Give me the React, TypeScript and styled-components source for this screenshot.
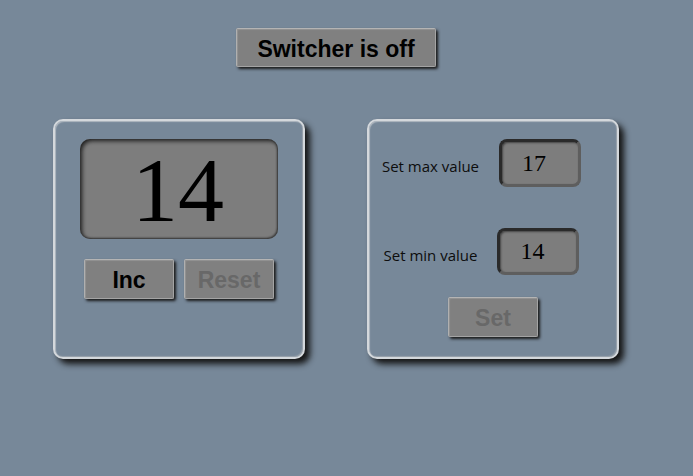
import React from "react";
import styled, { createGlobalStyle } from "styled-components";

const Global = createGlobalStyle`
  html, body { margin: 0; padding: 0; background: #778899; }
  body { font-family: "Liberation Sans", Arial, sans-serif; }
`;

const Page = styled.div`
  width: 693px;
  height: 476px;
  box-sizing: border-box;
  padding: 28px 0 0 53px;
  background: #778899;
`;

const Column = styled.div`
  width: 566px;
  display: flex;
  flex-direction: column;
  align-items: center;
  gap: 52px;
`;

const Cards = styled.div`
  display: flex;
  gap: 62px;
  align-self: stretch;
`;

const Button = styled.button<{ $w: number; $h?: number; $disabled?: boolean }>`
  width: ${(p) => p.$w}px;
  height: ${(p) => p.$h ?? 40}px;
  box-sizing: border-box;
  background: #808080;
  border: 1px solid #a4a4a4;
  border-top-color: #b4b4b4;
  border-left-color: #b0b0b0;
  border-radius: 2px;
  box-shadow: 2px 2px 3px #1a1a1a, inset 1px 1px 1px rgba(255,255,255,0.15);
  font-family: "Liberation Sans", Arial, sans-serif;
  font-weight: bold;
  font-size: 23px;
  color: ${(p) => (p.$disabled ? "#686868" : "#000")};
  padding: 3px 0 0 0;
  cursor: default;
`;

const Card = styled.div`
  width: 252px;
  height: 240px;
  box-sizing: border-box;
  border: 2px solid #d4d8dc;
  border-radius: 10px;
  background: #778899;
  box-shadow: 5px 5px 6px #151515, inset 1px 1px 1px #b0b8c0, inset -1px -1px 1px #9aa3ac;
  padding-top: 18px;
  display: flex;
  flex-direction: column;
  align-items: center;
`;

const Display = styled.div`
  width: 198px;
  height: 100px;
  box-sizing: border-box;
  background: #7d7d7d;
  border-radius: 10px;
  box-shadow: inset 2px 2px 4px #1e1e1e, inset -1px -1px 2px #3a3a3a;
  display: flex;
  align-items: center;
  justify-content: center;
  font-family: "Liberation Serif", "Times New Roman", serif;
  font-size: 92px;
  line-height: 1;
  color: #000;
  padding: 2px 2px 0 0;
`;

const ButtonRow = styled.div`
  display: flex;
  gap: 10px;
  margin-top: 20px;
`;

const SettingRow = styled.div<{ $mt: number; $h: number }>`
  display: flex;
  align-items: center;
  justify-content: center;
  gap: 20px;
  margin-top: ${(p) => p.$mt}px;
  height: ${(p) => p.$h}px;
  align-self: stretch;
  padding-right: 23px;
`;

const Label = styled.span`
  font-family: "Open Sans", "Noto Sans", sans-serif;
  font-size: 15px;
  color: #0d0d0d;
  padding-top: 6px;
`;

const NumberBox = styled.div<{ $h: number }>`
  width: 82px;
  height: ${(p) => p.$h}px;
  box-sizing: border-box;
  background: #7d7d7d;
  border: 3px solid;
  border-color: #2a2a2a #5e5e5e #5e5e5e #2a2a2a;
  border-radius: 8px;
  box-shadow: inset 1px 1px 2px #444;
  display: flex;
  align-items: center;
  justify-content: center;
  padding-right: 12px;
  font-family: "Liberation Serif", "Times New Roman", serif;
  font-size: 24px;
  color: #000;
`;

const SetWrap = styled.div`
  margin-top: 22px;
`;

export default function App() {
  return (
    <>
      <Global />
      <Page>
        <Column>
          <Button $w={200} $h={39}>Switcher is off</Button>
          <Cards>
            <Card>
              <Display>14</Display>
              <ButtonRow>
                <Button $w={90}>Inc</Button>
                <Button $w={90} $disabled>Reset</Button>
              </ButtonRow>
            </Card>
            <Card>
              <SettingRow $mt={0} $h={48}>
                <Label>Set max value</Label>
                <NumberBox $h={48}>17</NumberBox>
              </SettingRow>
              <SettingRow $mt={41} $h={47}>
                <Label>Set min value</Label>
                <NumberBox $h={47}>14</NumberBox>
              </SettingRow>
              <SetWrap>
                <Button $w={90} $disabled>Set</Button>
              </SetWrap>
            </Card>
          </Cards>
        </Column>
      </Page>
    </>
  );
}
